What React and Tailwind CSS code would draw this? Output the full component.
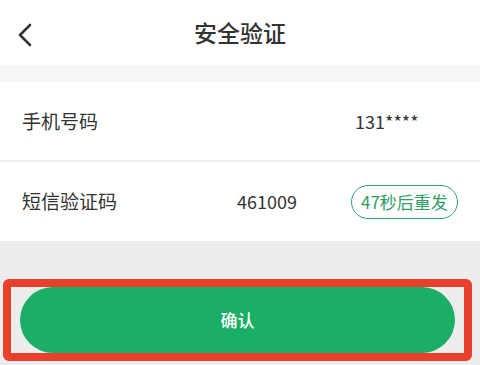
import React from 'react';

const font = { fontFamily: '"Noto Sans CJK SC", "Noto Sans", sans-serif' };

const BackIcon = () => (
    <svg width="16" height="24" viewBox="0 0 16 24" fill="none">
        <path d="M13 2 L3 12 L13 22" stroke="#333" strokeWidth="2.6" strokeLinecap="round" strokeLinejoin="round" />
    </svg>
);

const App = () => {
    return (
        <div className="w-[480px] h-[365px] bg-[#ededed] flex flex-col overflow-hidden" style={font}>
            {/* Header */}
            <header className="h-[65px] bg-white flex items-center relative flex-shrink-0">
                <button className="absolute left-[17px] top-[23px]">
                    <BackIcon />
                </button>
                <h1 className="w-full text-center text-[23px] font-medium text-[#333] leading-none -mt-[1px]">
                    安全验证
                </h1>
            </header>
            <div className="h-[17px] bg-[#f6f6f9] flex-shrink-0"></div>

            {/* Rows */}
            <div className="h-[78px] bg-white flex items-center px-[22px] text-[#333]">
                <span className="text-[19px] w-[333px]">手机号码</span>
                <span className="text-[18px]">131****</span>
            </div>
            <div className="h-[2px] bg-[#efefef]"></div>
            <div className="h-[79px] bg-white flex items-center pl-[22px] text-[#333]">
                <span className="text-[19px] w-[215px]">短信验证码</span>
                <span className="text-[18px] w-[114px]">461009</span>
                <span className="h-[34px] px-[9px] rounded-full border-[1.5px] border-[#2ea36a] text-[#2f9e64] text-[17px] flex items-center">
                    47秒后重发
                </span>
            </div>

            {/* Confirm */}
            <div className="mt-[38px] ml-[3px] w-[469px] border-[8px] border-[#e8402a] rounded-[6px] flex justify-center px-[9px] bg-[#ededed]">
                <button className="w-full h-[66px] rounded-full bg-[#1aae66] text-white text-[17px] font-medium">
                    确认
                </button>
            </div>
        </div>
    );
};

export default App;
